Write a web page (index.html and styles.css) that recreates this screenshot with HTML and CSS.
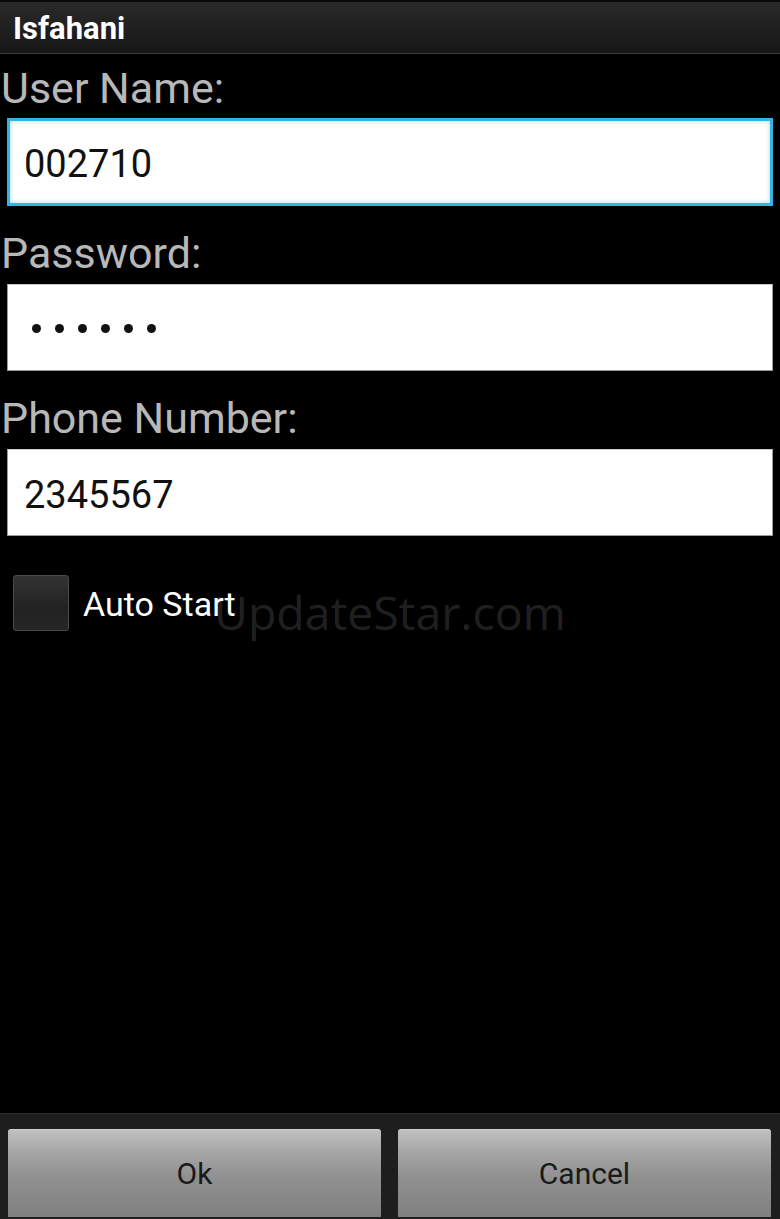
FILE: index.html
```html
<!DOCTYPE html>
<html>
<head>
<meta charset="utf-8">
<link rel="stylesheet" href="styles.css">
</head>
<body>
<div class="screen">
  <div class="titlebar"><span class="title">Isfahani</span></div>
  <div class="form">
    <div class="label first">User Name:</div>
    <div class="field focused"><span class="value">002710</span></div>
    <div class="label">Password:</div>
    <div class="field"><span class="dots"><i></i><i></i><i></i><i></i><i></i><i></i></span></div>
    <div class="label">Phone Number:</div>
    <div class="field"><span class="value">2345567</span></div>
    <div class="check-row">
      <span class="checkbox"></span>
      <span class="check-label">Auto Start</span>
      <span class="watermark">UpdateStar.com</span>
    </div>
  </div>
  <div class="buttonbar">
    <div class="btn">Ok</div>
    <div class="btn">Cancel</div>
  </div>
</div>
</body>
</html>
```

FILE: styles.css
```css
html, body {
  margin: 0;
  padding: 0;
  background: #000;
}
.screen {
  width: 780px;
  height: 1219px;
  display: flex;
  flex-direction: column;
  font-family: Roboto, "Liberation Sans", sans-serif;
  overflow: hidden;
}
.titlebar {
  height: 51px;
  border-top: 2px solid #0a0a0a;
  background: linear-gradient(#2a2a2a, #161616);
  border-bottom: 1px solid #3c3c3c;
  display: flex;
  align-items: center;
  padding-left: 13px;
}
.title {
  color: #fff;
  font-weight: bold;
  font-size: 31px;
  margin-top: 2px;
}
.form {
  flex: 1;
  display: flex;
  flex-direction: column;
}
.label {
  color: #b8b8b8;
  font-size: 43px;
  line-height: 50px;
  height: 50px;
  margin-top: 22px;
  padding-left: 1px;
}
.label.first {
  margin-top: 9px;
}
.field {
  margin: 6px 7px 0 7px;
  height: 85px;
  background: #fff;
  border: 1px solid #9a9a9a;
  border-top-color: #c8c8c8;
  display: flex;
  align-items: center;
  padding-left: 16px;
}
.field.focused {
  margin-top: 5px;
  height: 82px;
  border: 3px solid #35b3e6;
  box-shadow: inset 0 0 5px #9ddcf5;
  padding-left: 14px;
}
.value {
  color: #111;
  font-size: 38px;
  padding-top: 4px;
}
.dots {
  display: flex;
  gap: 14px;
  padding-left: 8px;
  padding-top: 2px;
}
.dots i {
  width: 9px;
  height: 9px;
  border-radius: 50%;
  background: #111;
}
.check-row {
  position: relative;
  display: flex;
  align-items: center;
  margin-top: 38px;
  padding-left: 13px;
  height: 57px;
}
.checkbox {
  width: 54px;
  height: 54px;
  border: 1px solid #4a4a4a;
  border-radius: 3px;
  background: linear-gradient(#333, #222 60%, #262626);
}
.check-label {
  color: #fff;
  font-size: 34px;
  margin-left: 14px;
  margin-top: 2px;
}
.watermark {
  position: absolute;
  left: 214px;
  top: 6px;
  font-family: "Open Sans", sans-serif;
  font-size: 46.5px;
  color: rgba(255, 255, 255, 0.14);
  white-space: nowrap;
}
.buttonbar {
  height: 90px;
  background: #1e1e1e;
  border-top: 1px solid #2a2a2a;
  padding: 15px 9px 0 8px;
  display: flex;
  gap: 17px;
}
.btn {
  flex: 1;
  height: 88px;
  border-radius: 3px 3px 0 0;
  background: linear-gradient(#c0c0c0, #a6a6a6 25%, #909090 55%, #808080);
  border-top: 1px solid #d0d0d0;
  box-sizing: border-box;
  display: flex;
  align-items: center;
  justify-content: center;
  color: #1a1a1a;
  font-size: 30px;
}
```
